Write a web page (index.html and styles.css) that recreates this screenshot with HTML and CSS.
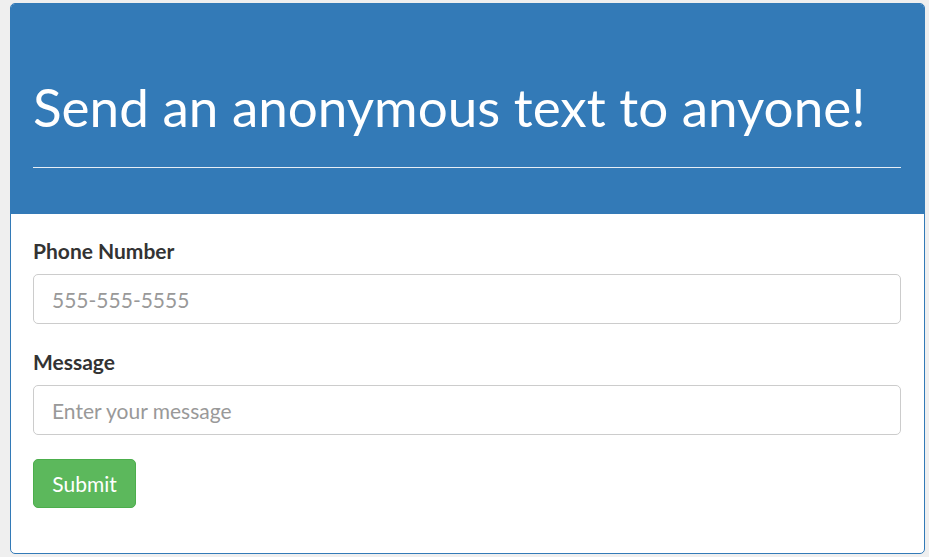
FILE: index.html
```html
<!DOCTYPE html>
<html>
<head>
<meta charset="utf-8">
<link rel="stylesheet" href="styles.css">
</head>
<body>
<div class="panel">
  <div class="panel-heading">
    <h1 class="title">Send an anonymous text to anyone!</h1>
    <hr class="rule">
  </div>
  <div class="panel-body">
    <div class="field">
      <label class="label">Phone Number</label>
      <input class="input" type="text" placeholder="555-555-5555">
    </div>
    <div class="field field-last">
      <label class="label">Message</label>
      <input class="input" type="text" placeholder="Enter your message">
    </div>
    <button class="btn">Submit</button>
  </div>
</div>
</body>
</html>
```
FILE: styles.css
```css
html, body {
  margin: 0;
  padding: 0;
}
body {
  background: #efefef;
  font-family: Lato, "Open Sans", sans-serif;
  color: #333;
  padding: 3px 4px 0 10px;
  height: 557px;
  box-sizing: border-box;
}
.panel {
  width: 915px;
  height: 551px;
  box-sizing: border-box;
  border: 1px solid #337ab7;
  border-radius: 5px;
  background: #fff;
  overflow: hidden;
}
.panel-heading {
  background: #337ab7;
  height: 210px;
  padding: 0 23px 0 22px;
  box-sizing: border-box;
  display: flow-root;
}
.title {
  margin: 71px 0 0 0;
  font-weight: 400;
  font-size: 53px;
  line-height: 64px;
  color: #fff;
  white-space: nowrap;
}
.rule {
  margin: 28px 0 0 0;
  border: 0;
  border-top: 1px solid #e6eef6;
  height: 0;
}
.panel-body {
  padding: 24px 23px 24px 22px;
}
.field {
  display: flex;
  flex-direction: column;
  margin-bottom: 25px;
}
.field-last { margin-bottom: 24px; }
.label {
  font-weight: 700;
  font-size: 21px;
  line-height: 26px;
  margin-bottom: 10px;
}
.input {
  height: 50px;
  box-sizing: border-box;
  border: 1px solid #ccc;
  border-radius: 5px;
  padding: 0 18px;
  font-family: Lato, sans-serif;
  font-size: 21px;
  color: #555;
}
.input::placeholder { color: #999; }
.btn {
  background: #5cb85c;
  border: 1px solid #4cae4c;
  border-radius: 5px;
  color: #fff;
  font-family: Lato, sans-serif;
  font-size: 21px;
  height: 49px;
  width: 103px;
  padding: 0;
}
```
